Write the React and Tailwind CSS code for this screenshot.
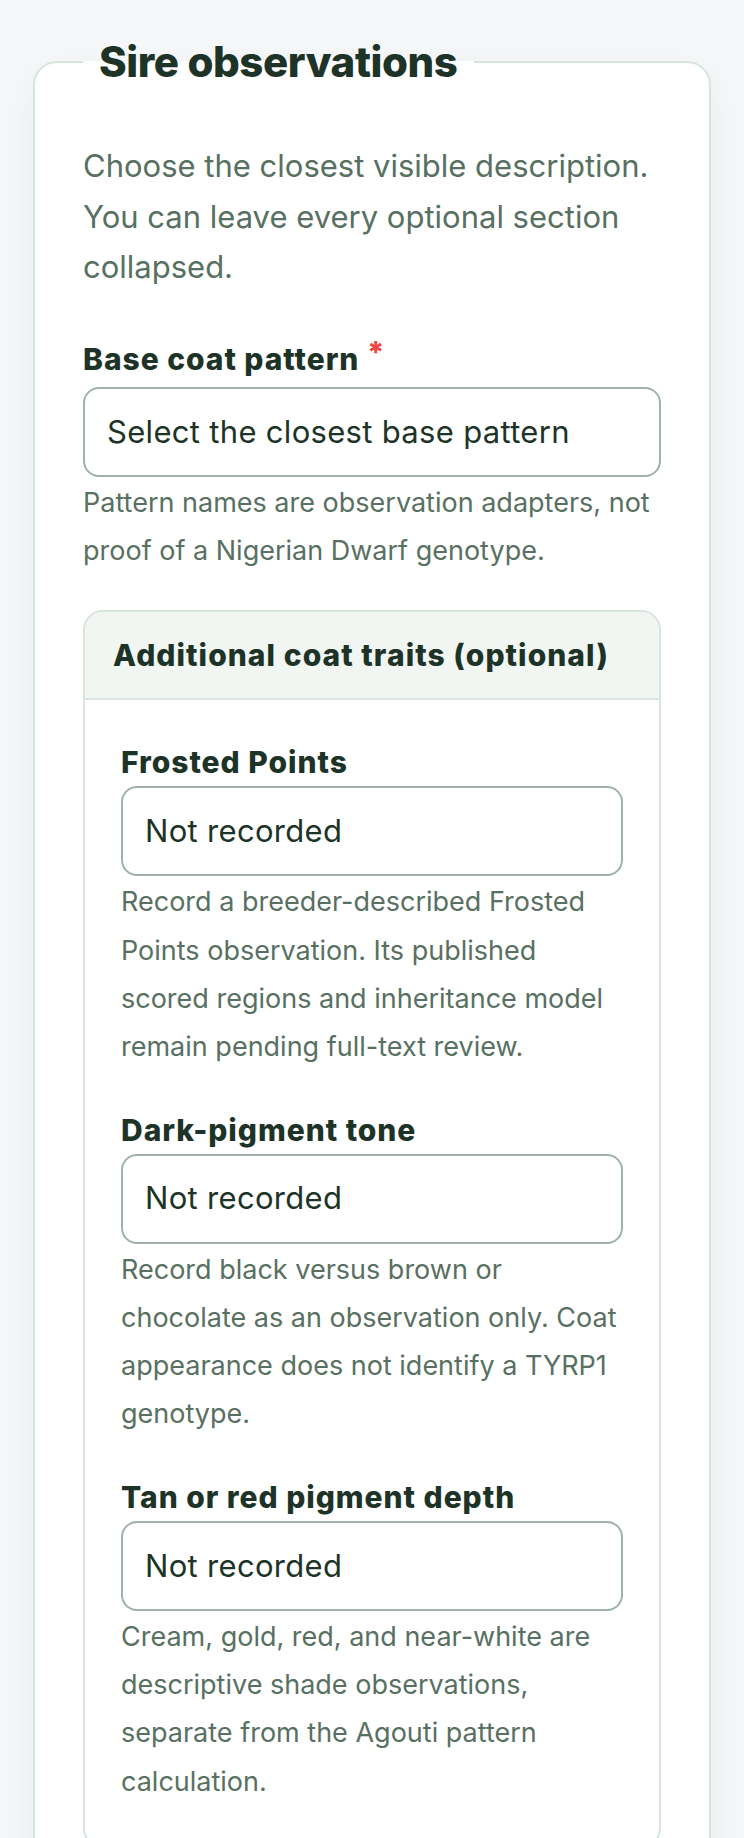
import React from 'react';

const fields = [
    {
        label: 'Frosted Points',
        help: 'Record a breeder-described Frosted Points observation. Its published scored regions and inheritance model remain pending full-text review.',
    },
    {
        label: 'Dark-pigment tone',
        help: 'Record black versus brown or chocolate as an observation only. Coat appearance does not identify a TYRP1 genotype.',
    },
    {
        label: 'Tan or red pigment depth',
        help: 'Cream, gold, red, and near-white are descriptive shade observations, separate from the Agouti pattern calculation.',
    },
];

// Plain select without chevron, like the reference
const ObservationSelect = ({ id, placeholder }) => (
    <select
        id={id}
        defaultValue=""
        className="block w-full h-[90px] appearance-none rounded-[16px] border-2 border-[#9fb2a5] bg-white pl-[22px] pr-4 text-[31px] tracking-[0.01em] text-[#1e3328] outline-none"
    >
        <option value="">{placeholder}</option>
    </select>
);

const App = () => {
    return (
        <div className="min-h-screen bg-[#f6f7f9] px-[33px] pt-[38px] font-['Inter',sans-serif]">
            <fieldset className="rounded-3xl border-2 border-[#d7e5dc] bg-white px-12 pt-[55px] pb-12 shadow-[0_12px_40px_rgba(20,45,30,0.05)]">
                <legend className="px-4 text-[42px] font-extrabold leading-[48px] tracking-[-0.01em] text-[#1e3328]">
                    Sire observations
                </legend>

                <p className="mb-[45px] text-[31px] leading-[50.6px] text-[#587062]">
                    Choose the closest visible description. You can leave every optional section collapsed.
                </p>

                <div>
                    <label htmlFor="base-pattern" className="mb-[7px] block text-[30px] font-extrabold leading-[42px] tracking-[0.032em] text-[#1e3328]">
                        Base coat pattern{' '}
                        <span className="relative -top-[7px] text-[#ef4444]">*</span>
                    </label>
                    <ObservationSelect id="base-pattern" placeholder="Select the closest base pattern" />
                    <p className="mt-[2px] text-[27px] leading-[48.3px] text-[#587062]">
                        Pattern names are observation adapters, not proof of a Nigerian Dwarf genotype.
                    </p>
                </div>

                <div className="mt-[35px] overflow-hidden rounded-[20px] border-2 border-[#d7e5dc]">
                    <div className="border-b-2 border-[#d7e5dc] bg-[#f1f6f2] px-[28px] py-[22px] text-[30px] font-extrabold leading-[42px] tracking-[0.035em] text-[#1e3328]">
                        Additional coat traits (optional)
                    </div>
                    <div className="flex flex-col gap-[37px] px-9 pt-[41px] pb-10">
                        {fields.map((field, index) => (
                            <div key={index}>
                                <label htmlFor={`trait-${index}`} className="mb-[3px] block text-[30px] font-extrabold leading-[42px] tracking-[0.032em] text-[#1e3328]">
                                    {field.label}
                                </label>
                                <ObservationSelect id={`trait-${index}`} placeholder="Not recorded" />
                                <p className="mt-[2px] text-[27px] leading-[48.3px] text-[#587062]">{field.help}</p>
                            </div>
                        ))}
                    </div>
                </div>
            </fieldset>
        </div>
    );
};

export default App;
